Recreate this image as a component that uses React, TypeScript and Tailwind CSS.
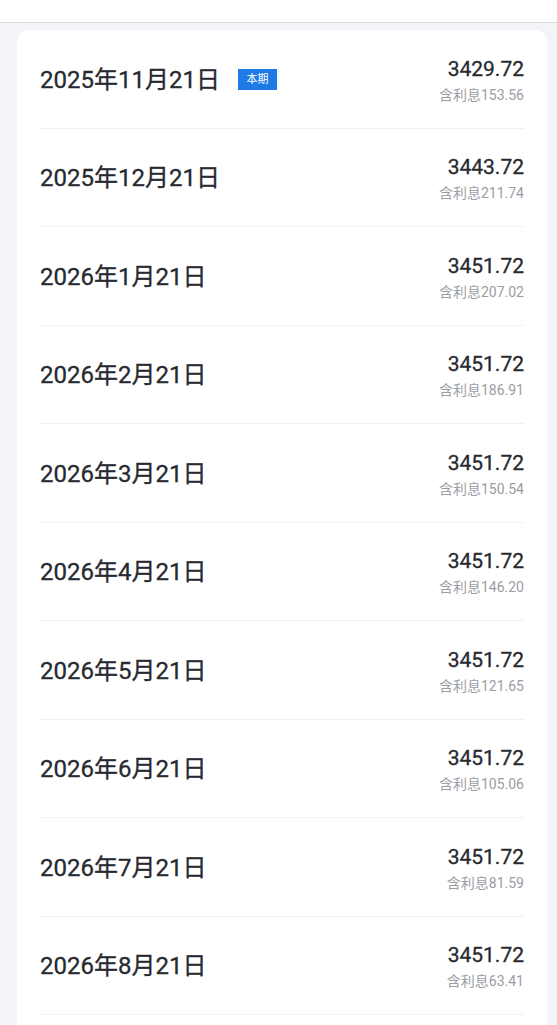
import React from "react";

const rows = [
  { date: "2025年11月21日", amount: "3429.72", interest: "153.56", current: true },
  { date: "2025年12月21日", amount: "3443.72", interest: "211.74" },
  { date: "2026年1月21日", amount: "3451.72", interest: "207.02" },
  { date: "2026年2月21日", amount: "3451.72", interest: "186.91" },
  { date: "2026年3月21日", amount: "3451.72", interest: "150.54" },
  { date: "2026年4月21日", amount: "3451.72", interest: "146.20" },
  { date: "2026年5月21日", amount: "3451.72", interest: "121.65" },
  { date: "2026年6月21日", amount: "3451.72", interest: "105.06" },
  { date: "2026年7月21日", amount: "3451.72", interest: "81.59" },
  { date: "2026年8月21日", amount: "3451.72", interest: "63.41" },
];

const App: React.FC = () => {
  return (
    <div
      className="w-[557px] h-[1025px] overflow-hidden bg-[#f2f4f8]"
      style={{ fontFamily: 'Roboto, "Noto Sans CJK SC", sans-serif' }}
    >
      <div className="h-[23px] bg-white border-b border-[#d9dbe0]" />
      <div className="pl-[17px] pr-[10px] pt-[7px]">
        <div className="bg-white rounded-[12px] px-[23px] pb-[40px]">
          {rows.map((row) => (
            <Row key={row.date} {...row} />
          ))}
        </div>
      </div>
    </div>
  );
};

export default App;

const Row: React.FC<{
  date: string;
  amount: string;
  interest: string;
  current?: boolean;
}> = ({ date, amount, interest, current }) => (
  <div className="h-[98.5px] flex items-center justify-between border-b border-[#f1f2f4]">
    <div className="flex items-center pt-[2px]">
      <span className="text-[24px] leading-none font-normal text-[#272a30] [-webkit-text-stroke:0.3px_#272a30]">
        {date}
      </span>
      {current && (
        <span className="ml-[18px] h-[21px] w-[39px] flex items-center justify-center bg-[#1e7be6] text-white text-[11px] leading-none">
          本期
        </span>
      )}
    </div>
    <div className="flex flex-col items-end pt-[3px]">
      <span className="text-[21px] leading-none font-normal text-[#272a30] [-webkit-text-stroke:0.3px_#272a30]">
        {amount}
      </span>
      <span className="mt-[8px] text-[14px] leading-none text-[#9a9da3]">
        含利息{interest}
      </span>
    </div>
  </div>
);
